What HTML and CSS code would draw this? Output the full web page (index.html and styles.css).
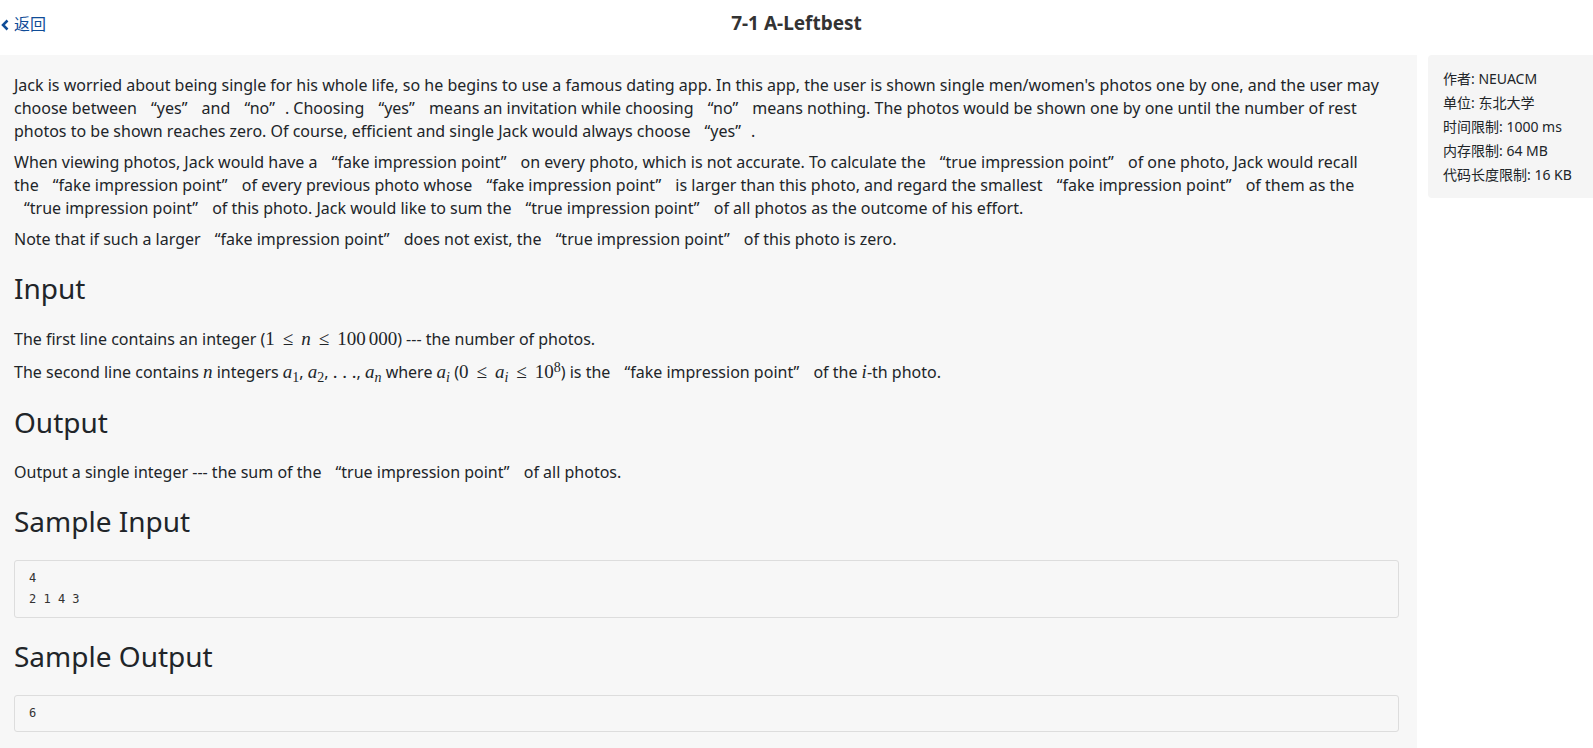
FILE: index.html
```html
<!DOCTYPE html>
<html lang="zh-CN">
<head>
<meta charset="utf-8">
<meta name="viewport" content="width=device-width, initial-scale=1">
<title>7-1 A-Leftbest</title>
<link rel="stylesheet" href="styles.css">
</head>
<body>
<header class="topbar">
  <a class="back" href="#"><svg class="chevron" viewBox="0 0 8 12" aria-hidden="true"><path d="M6.500 1.500 2 6l4.500 4.500"/></svg>返回</a>
  <h1 class="title">7-1 A-Leftbest</h1>
</header>
<div class="layout">
  <main class="problem" lang="en">
    <p>Jack is worried about being single for his whole life, so he begins to use a famous dating app. In this app, the user is shown single men/women's photos one by one, and the user may choose between <span class="quoted">“yes”</span> and <span class="quoted">“no”</span>. Choosing <span class="quoted">“yes”</span> means an invitation while choosing <span class="quoted">“no”</span> means nothing. The photos would be shown one by one until the number of rest photos to be shown reaches zero. Of course, efficient and single Jack would always choose <span class="quoted">“yes”</span>.</p>
    <p>When viewing photos, Jack would have a <span class="quoted">“fake impression point”</span> on every photo, which is not accurate. To calculate the <span class="quoted">“true impression point”</span> of one photo, Jack would recall<br>the <span class="quoted">“fake impression point”</span> of every previous photo whose <span class="quoted">“fake impression point”</span> is larger than this photo, and regard the smallest <span class="quoted">“fake impression point”</span> of them as the<br><span class="quoted">“true impression point”</span> of this photo. Jack would like to sum the <span class="quoted">“true impression point”</span> of all photos as the outcome of his effort.</p>
    <p>Note that if such a larger <span class="quoted">“fake impression point”</span> does not exist, the <span class="quoted">“true impression point”</span> of this photo is zero.</p>
    <h2>Input</h2>
    <p class="formula">The first line contains an integer (<span class="math">1<span class="rel">≤</span><i>n</i><span class="rel">≤</span>100<span class="thin"></span>000</span>) --- the number of photos.</p>
    <p class="formula">The second line contains <span class="math"><i>n</i></span> integers <span class="math"><i>a</i><sub>1</sub></span>, <span class="math"><i>a</i><sub>2</sub></span>, <span class="math">. . .</span>, <span class="math"><i>a</i><sub><i>n</i></sub></span> where <span class="math"><i>a</i><sub><i>i</i></sub></span> (<span class="math">0<span class="rel">≤</span><i>a</i><sub><i>i</i></sub><span class="rel">≤</span>10<sup>8</sup></span>) is the <span class="quoted">“fake impression point”</span> of the <span class="math"><i>i</i></span>-th photo.</p>
    <h2>Output</h2>
    <p>Output a single integer --- the sum of the <span class="quoted">“true impression point”</span> of all photos.</p>
    <h2>Sample Input</h2>
    <pre><code>4
2 1 4 3</code></pre>
    <h2>Sample Output</h2>
    <pre><code>6</code></pre>
  </main>
  <aside class="meta">
    <div>作者: NEUACM</div>
    <div>单位: 东北大学</div>
    <div>时间限制: 1000 ms</div>
    <div>内存限制: 64 MB</div>
    <div>代码长度限制: 16 KB</div>
  </aside>
</div>
</body>
</html>
```
FILE: styles.css
```css
* { box-sizing: border-box; }
body {
  margin: 0;
  min-height: 100vh;
  display: flex;
  flex-direction: column;
  background: #fff;
  color: #212529;
  font: 16px/23px "Noto Sans", "Noto Sans CJK SC", sans-serif;
}
.topbar {
  display: grid;
  grid-template-columns: 1fr auto 1fr;
  align-items: end;
  padding: 11px 0 19px;
}
.back {
  display: flex;
  align-items: center;
  gap: 5px;
  padding-left: 1px;
  color: #0f4c97;
  text-decoration: none;
}
.chevron {
  width: 8px;
  height: 12px;
  fill: none;
  stroke: currentColor;
  stroke-width: 2.500;
}
.title {
  margin: 0;
  font-size: 19px;
  line-height: 25px;
  color: #333;
}
.layout {
  flex: 1;
  display: flex;
  gap: 11px;
}
.problem {
  flex: 1;
  min-width: 0;
  padding: 19px 18px 16px 14px;
  background: #f7f7f7;
}
.problem p { margin: 0 0 8px; }
.problem .formula { line-height: 25px; }
.problem h2 {
  margin: 17px 0 19px;
  font-size: 28px;
  font-weight: 400;
  line-height: 40px;
}
.quoted { margin: 0 10px; }
.math {
  font-family: "Liberation Serif", serif;
  font-size: 19px;
  line-height: 1;
  white-space: nowrap;
}
.math sub, .math sup { font-size: 14px; line-height: 0; }
.math sub { vertical-align: -4px; }
.math sup { vertical-align: 6px; }
.rel { margin: 0 8px; }
.thin { margin-left: 3px; }
pre {
  margin: 0 0 18px;
  padding: 7px 14px;
  border: 1px solid #ddd;
  border-radius: 3px;
}
pre:last-child { margin-bottom: 0; }
code {
  display: block;
  color: #333;
  font: 12px/21px "DejaVu Sans Mono", monospace;
}
.meta {
  flex: none;
  align-self: flex-start;
  width: 165px;
  padding: 12px 15px 11px;
  border-radius: 4px 0 0 4px;
  background: #f5f5f5;
  font-size: 14px;
  line-height: 24px;
  white-space: nowrap;
}
```
